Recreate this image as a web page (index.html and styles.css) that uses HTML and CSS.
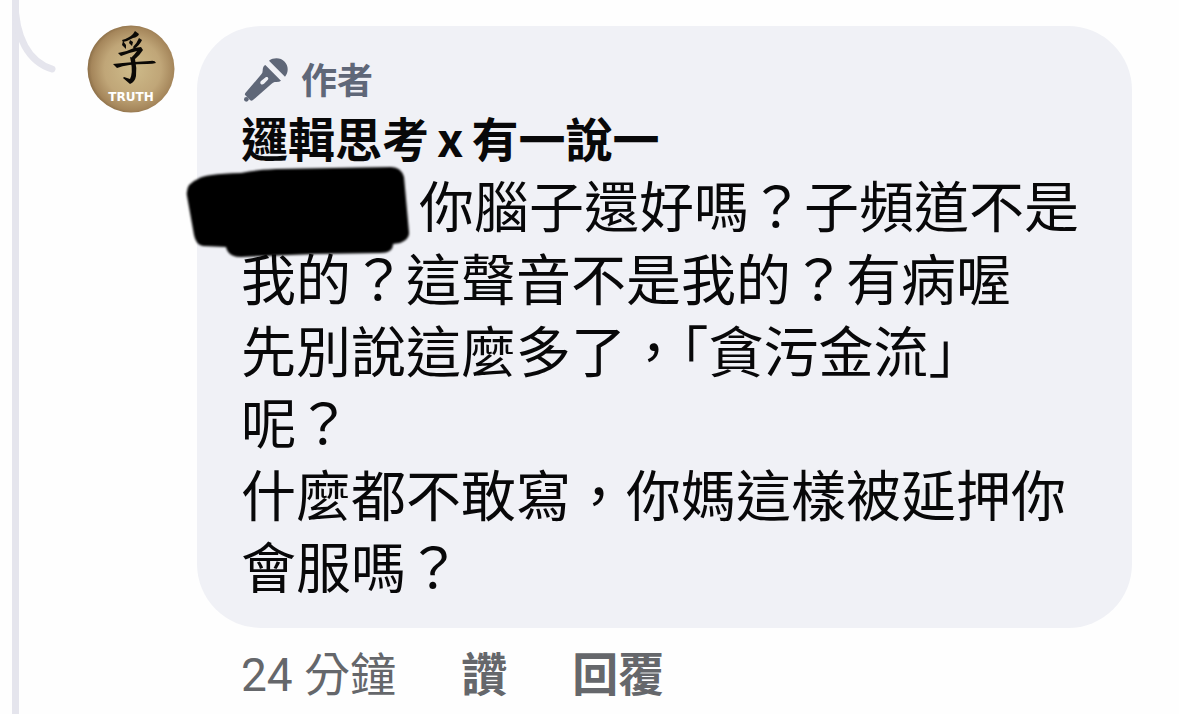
FILE: index.html
```
<!DOCTYPE html>
<html lang="zh-Hant">
<head>
<meta charset="utf-8">
<meta name="viewport" content="width=device-width, initial-scale=1">
<title>留言</title>
<link rel="stylesheet" href="styles.css">
</head>
<body>
<main class="thread">
  <div class="rail">
    <svg class="branch" viewBox="0 0 46 76" width="46" height="76" aria-hidden="true">
      <path d="M3 0C3 38 17 62 40 69" fill="none" stroke="#e5e5ed" stroke-width="7" stroke-linecap="round"/>
    </svg>
  </div>
  <svg class="avatar" viewBox="0 0 88 88" role="img" aria-label="TRUTH">
    <defs>
      <radialGradient id="paper" cx="52%" cy="50%" r="54%">
        <stop offset="0" stop-color="#cebb8a"/>
        <stop offset=".6" stop-color="#c0a678"/>
        <stop offset=".88" stop-color="#a5865b"/>
        <stop offset="1" stop-color="#80643f"/>
      </radialGradient>
    </defs>
    <circle cx="44" cy="44" r="43.500" fill="url(#paper)"/>
    <g fill="#0b0906">
      <path d="M48 6L52 9Q51 12 46 13Q41 16 36 17L35 15Q42 13 46 9Z"/>
      <path d="M36 16L39 20L39 24L35 20Z"/>
      <path d="M43 15L46 17L45 21L42 18Z"/>
      <path d="M52 13L55 15Q53 20 47 24L46 22Q50 18 52 13Z"/>
      <path d="M31 28Q39 27 47 23L54 22L56 25Q53 30 47 35L44 33Q48 29 50 26Q41 28 34 31Z"/>
      <path d="M26 39Q35 38 47 37L63 36Q68 35 69 38Q66 39 60 39Q40 39 30 43Z"/>
      <path d="M43 32L48 34Q50 43 49 51Q48 57 43 59L36 53L37 52L43 54Q46 48 44 37Z"/>
    </g>
    <text x="44" y="76" class="avatar-text">TRUTH</text>
  </svg>
  <article class="comment">
    <div class="bubble">
      <div class="badge">
        <svg class="mic" viewBox="33 45 132 132" width="44" height="44" fill="#5f6778" aria-hidden="true">
          <path d="M117 47C132 36 153 38 164 50C176 62 176 83 165 95Z"/>
          <path fill-rule="evenodd" d="M106 60L153 107Q148 112 134 111Q129 112 124 117L68 166Q64 169 60 165L46 151Q43 148 46 144L94 88Q98 83 98 77Q98 64 106 60ZM107 97L93 108C87 115 95 122 102 116L113 105C118 99 112 93 107 97Z"/>
          <circle cx="49" cy="163" r="7"/>
        </svg>
        <span>作者</span>
      </div>
      <h2 class="name">邏輯思考<span class="latin">x</span>有一說一</h2>
      <p class="text"><span class="mention"><svg class="redaction" viewBox="0 0 224 96" width="224" height="96" aria-hidden="true"><path d="M12 14Q18 9 55 8Q68 5 90 4L205 2Q215 2 218 12L223 67Q224 74 214 78L207 79Q207 88 194 88L130 89L55 92Q42 92 40 82L17 81Q10 80 8 70L1 31Q-1 19 12 14Z"/></svg></span>你腦子還好嗎？子頻道不是<br>我的？這聲音不是我的？有病喔<br>先別說這麼多了，<span class="half">「</span>貪污金流<span class="half">」</span><br>呢？<br>什麼都不敢寫，你媽這樣被延押你<br>會服嗎？</p>
    </div>
    <footer class="actions">
      <time>24 分鐘</time>
      <button type="button">讚</button>
      <button type="button">回覆</button>
    </footer>
  </article>
</main>
</body>
</html>
```
FILE: styles.css
```
* { box-sizing: border-box; }

body {
  margin: 0;
  background: #fefefe;
  color: #080809;
  font-family: Roboto, "Noto Sans CJK TC", sans-serif;
}

.thread {
  display: flex;
  align-items: flex-start;
  min-height: 100vh;
  padding-right: 47px;
}

.rail {
  position: relative;
  align-self: stretch;
  flex: none;
  width: 7px;
  margin-left: 12px;
  margin-right: 68px;
  background: #e5e5ed;
}

.branch {
  position: absolute;
  top: 0;
  left: 0;
}

.avatar {
  flex: none;
  width: 88px;
  height: 88px;
  margin-top: 25px;
  margin-right: 22px;
}

.avatar-text {
  fill: #fff;
  font: 700 12px "DejaVu Sans", sans-serif;
  text-anchor: middle;
}

.comment {
  flex: 1;
  min-width: 0;
  padding-top: 26px;
}

.bubble {
  padding: 26px 24px 28px 44px;
  border-radius: 64px;
  background: #f0f1f6;
}

.badge {
  display: flex;
  align-items: center;
  gap: 16px;
  color: #5f6778;
  font-size: 36px;
  font-weight: 700;
  line-height: 60px;
}

.mic { overflow: visible; }

.name {
  margin: 0 0 5px;
  font-family: "Noto Sans CJK TC", sans-serif;
  font-size: 47px;
  font-weight: 700;
  line-height: 50px;
}

.latin { margin: 0 8px; }

.text {
  margin: 0;
  font-family: "Noto Sans CJK TC", sans-serif;
  font-size: 55px;
  line-height: 72px;
}

.mention {
  position: relative;
  display: inline-block;
  width: 178px;
  height: 55px;
  vertical-align: middle;
}

.redaction {
  position: absolute;
  top: -20px;
  left: -55px;
  filter: blur(1px);
}

.half { font-feature-settings: "halt"; }

.actions {
  display: flex;
  gap: 65px;
  padding: 17px 44px 10px;
  color: #65676b;
  font-size: 46px;
  line-height: 60px;
}

.actions button {
  padding: 0;
  border: 0;
  background: none;
  color: inherit;
  font: inherit;
  font-weight: 700;
}
```
